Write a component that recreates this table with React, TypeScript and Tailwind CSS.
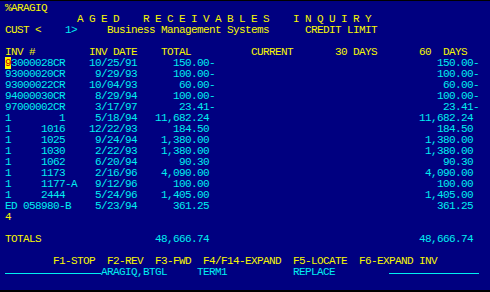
import React from "react";

type Seg = { t: string; c?: "y" | "c" | "cur" | "line" };

const YELLOW = "text-[#f8f800]";
const CYAN = "text-[#00eef0]";

// 0-9 id, date right-aligned to col 21, total digits end col 33, 60 days digits end col 77
const invoices = [
  { id: "93000028CR", date: "10/25/91", amt: "150.00", neg: true },
  { id: "93000020CR", date: "9/29/93", amt: "100.00", neg: true },
  { id: "93000022CR", date: "10/04/93", amt: "60.00", neg: true },
  { id: "94000030CR", date: "8/29/94", amt: "100.00", neg: true },
  { id: "97000002CR", date: "3/17/97", amt: "23.41", neg: true },
  { id: "1        1", date: "5/18/94", amt: "11,682.24", neg: false },
  { id: "1     1016", date: "12/22/93", amt: "184.50", neg: false },
  { id: "1     1025", date: "9/24/94", amt: "1,380.00", neg: false },
  { id: "1     1030", date: "2/22/93", amt: "1,380.00", neg: false },
  { id: "1     1062", date: "6/20/94", amt: "90.30", neg: false },
  { id: "1     1173", date: "2/16/96", amt: "4,090.00", neg: false },
  { id: "1     1177-A", date: "9/12/96", amt: "100.00", neg: false },
  { id: "1     2444", date: "5/24/96", amt: "1,405.00", neg: false },
  { id: "ED 058980-B", date: "5/23/94", amt: "361.25", neg: false },
];

function invoiceRow(inv: (typeof invoices)[number], first: boolean): Seg[] {
  const amt = inv.amt + (inv.neg ? "-" : " ");
  const rest =
    inv.id.padEnd(14) + inv.date.padStart(8) + amt.padStart(13) + amt.padStart(44);
  if (first) {
    return [{ t: rest.slice(0, 1), c: "cur" }, { t: rest.slice(1), c: "c" }];
  }
  return [{ t: rest, c: "c" }];
}

const rows: Seg[][] = [
  [{ t: "%ARAGIQ", c: "y" }],
  [{ t: "            A G E D    R E C E I V A B L E S    I N Q U I R Y", c: "y" }],
  [
    { t: "CUST <    ", c: "y" },
    { t: "1>", c: "c" },
    { t: "     Business Management Systems      CREDIT LIMIT", c: "y" },
  ],
  [],
  [
    {
      t: "INV #         INV DATE    TOTAL          CURRENT       30 DAYS       60  DAYS",
      c: "y",
    },
  ],
  ...invoices.map((inv, i) => invoiceRow(inv, i === 0)),
  [{ t: "4", c: "y" }],
  [],
  [
    { t: "TOTALS".padEnd(22), c: "y" },
    { t: "48,666.74 ".padStart(13) + "48,666.74 ".padStart(44), c: "c" },
  ],
  [],
  [
    {
      t: "        F1-STOP  F2-REV  F3-FWD  F4/F14-EXPAND  F5-LOCATE  F6-EXPAND INV",
      c: "y",
    },
  ],
  [
    { t: "16", c: "line" },
    { t: "ARAGIQ,BTGL     TERM1           REPLACE         ", c: "c" },
    { t: "15", c: "line" },
  ],
];

function Segment({ s }: { s: Seg }) {
  if (s.c === "line") {
    return (
      <span
        className={`inline-block h-px bg-[#00eef0] align-[1px] ${
          s.t === "16" ? "w-[96px]" : "w-[90px]"
        }`}
      />
    );
  }
  if (s.c === "cur") {
    return <span className="bg-[#f8f800] text-[#d00000]">{s.t}</span>;
  }
  return <span className={s.c === "c" ? CYAN : YELLOW}>{s.t}</span>;
}

export default function App() {
  return (
    <div className="w-[490px] h-[292px] box-border bg-[#000080] border-t border-b-2 border-black overflow-hidden">
      <div className="pt-[2px] pl-[5px] font-['Liberation_Mono',monospace] text-[11px] tracking-[-0.6px] leading-[11px] whitespace-pre">
        {rows.map((r, i) => (
          <div key={i} className="h-[11px]">
            {r.map((s, j) => (
              <Segment key={j} s={s} />
            ))}
          </div>
        ))}
      </div>
    </div>
  );
}
